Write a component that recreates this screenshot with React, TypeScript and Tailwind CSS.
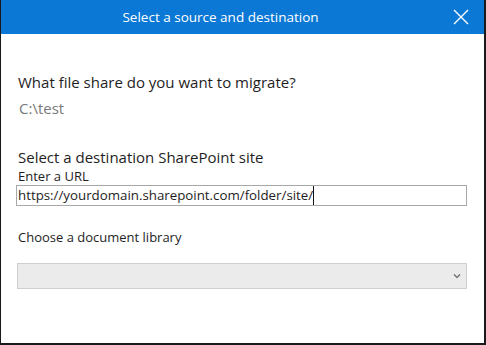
import React from "react";

export default function App() {
  return (
    <div
      className="w-[486px] h-[345px] bg-white border-l border-r-2 border-b-2 border-[#1a1a1a] flex flex-col overflow-hidden"
      style={{ fontFamily: '"Open Sans", "Noto Sans", sans-serif' }}
    >
      <div className="h-[34px] bg-[#0a78d4] flex items-center shrink-0">
        <div className="flex-1 text-center text-white text-[13.5px] leading-[20px]">
          Select a source and destination
        </div>
        <div className="w-[42px] h-[34px] flex items-center justify-center mr-[2px]">
          <svg width="16" height="16" viewBox="0 0 16 16" fill="none">
            <path d="M1 1 L15 15 M15 1 L1 15" stroke="white" strokeWidth="1.4" />
          </svg>
        </div>
      </div>
      <div className="flex flex-col px-[16px] pt-[38px]">
        <div className="text-[15px] leading-[20px] text-[#1e1e1e] pl-[1px]">
          What file share do you want to migrate?
        </div>
        <div className="text-[15px] leading-[20px] text-[#7a7a7a] mt-[6px] pl-[2px]">C:\test</div>
        <div className="text-[15px] leading-[19px] text-[#1e1e1e] mt-[30px] pl-[1px]">
          Select a destination SharePoint site
        </div>
        <div className="text-[13px] leading-[18px] text-[#1e1e1e] pl-[1px]">Enter a URL</div>
        <div className="ml-[-1px] h-[21px] w-[451px] border border-[#a8a8a8] flex items-center pl-[1px] text-[13.3px] leading-[19px] text-[#1e1e1e]">
          <span>https://yourdomain.sharepoint.com/folder/site/</span>
          <span className="w-px h-[19px] bg-[#111]" />
        </div>
        <div className="text-[13px] leading-[18px] text-[#1e1e1e] mt-[22px] pl-[1px]">
          Choose a document library
        </div>
        <div className="mt-[17px] h-[26px] w-[450px] bg-[#ebebeb] border border-[#cfcfcf] flex items-center justify-end pr-[5px]">
          <svg width="8" height="6" viewBox="0 0 8 6" fill="none">
            <path d="M1 1.5 L4 4.5 L7 1.5" stroke="#666" strokeWidth="1.2" />
          </svg>
        </div>
      </div>
    </div>
  );
}
